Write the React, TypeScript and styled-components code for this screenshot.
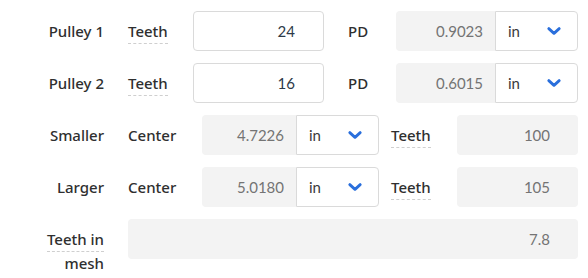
import styled, { createGlobalStyle } from 'styled-components';

const GlobalStyle = createGlobalStyle`
  body {
    margin: 0;
    background: #fff;
    font-family: Lato, "Noto Sans", sans-serif;
    color: #2f2f2f;
  }
`;

function Chevron() {
  return (
    <svg width="14" height="8" viewBox="0 0 14 8" fill="none">
      <polyline points="1.8,1.6 7,6.4 12.2,1.6" stroke="#2a6fdc" strokeWidth="2.8" strokeLinecap="round" strokeLinejoin="round" />
    </svg>
  );
}

function UnitSelect() {
  return (
    <SelectBox>
      <span>in</span>
      <Chevron />
    </SelectBox>
  );
}

interface ComboProps {
  value: string;
  width: number;
}

function Combo({ value, width }: ComboProps) {
  return (
    <ComboWrap $w={width}>
      <Output value={value} readOnly $pr={12} $joined />
      <UnitSelect />
    </ComboWrap>
  );
}

export default function App() {
  return (
    <>
      <GlobalStyle />
      <Form>
        <Row>
          <MainLabel>Pulley 1</MainLabel>
          <SubLabel $w={65}><Dotted>Teeth</Dotted></SubLabel>
          <Field defaultValue="24" $w={131} />
          <SubLabel $w={72} $pl={24}>PD</SubLabel>
          <Combo value="0.9023" width={182} />
        </Row>
        <Row>
          <MainLabel>Pulley 2</MainLabel>
          <SubLabel $w={65}><Dotted>Teeth</Dotted></SubLabel>
          <Field defaultValue="16" $w={131} />
          <SubLabel $w={72} $pl={24}>PD</SubLabel>
          <Combo value="0.6015" width={182} />
        </Row>
        <Row>
          <MainLabel>Smaller</MainLabel>
          <SubLabel $w={74}>Center</SubLabel>
          <Combo value="4.7226" width={177} />
          <SubLabel $w={78} $pl={12}><Dotted>Teeth</Dotted></SubLabel>
          <Output value="100" readOnly $w={121} $pr={28} />
        </Row>
        <Row>
          <MainLabel>Larger</MainLabel>
          <SubLabel $w={74}>Center</SubLabel>
          <Combo value="5.0180" width={177} />
          <SubLabel $w={78} $pl={12}><Dotted>Teeth</Dotted></SubLabel>
          <Output value="105" readOnly $w={121} $pr={28} />
        </Row>
        <Row>
          <MainLabel><Dotted>Teeth in mesh</Dotted></MainLabel>
          <Output value="7.8" readOnly $w={450} $pr={28} />
        </Row>
      </Form>
    </>
  );
}

const Form = styled.div`
  display: flex;
  flex-direction: column;
  gap: 12px;
  padding: 11px 10px 0 24px;
  font-size: 15px;
`;

const Row = styled.div`
  display: flex;
  align-items: flex-start;
  min-height: 40px;
`;

const MainLabel = styled.div`
  width: 80px;
  margin-right: 24px;
  padding-top: 8px;
  text-align: right;
  line-height: 24px;
  font-family: "Noto Sans", Lato, sans-serif;
  font-size: 15px;
  font-weight: 500;
  color: #2f2f2f;
`;

const SubLabel = styled.div<{ $w: number; $pl?: number }>`
  width: ${(p) => p.$w}px;
  padding-left: ${(p) => p.$pl ?? 0}px;
  box-sizing: border-box;
  padding-top: 8px;
  line-height: 24px;
  font-family: "Noto Sans", Lato, sans-serif;
  font-size: 15px;
  font-weight: 500;
  white-space: nowrap;
`;

const Dotted = styled.span`
  border-bottom: 1px dashed #cfcfcf;
  padding-bottom: 2px;
`;

const Field = styled.input<{ $w: number }>`
  width: ${(p) => p.$w}px;
  height: 40px;
  box-sizing: border-box;
  border: 1px solid #dadada;
  border-radius: 4px;
  background: #fff;
  padding: 0 28px 0 12px;
  text-align: right;
  font: inherit;
  font-size: 15px;
  color: #2e3a48;
  outline: none;
`;

const Output = styled.input<{ $w?: number; $pr: number; $joined?: boolean }>`
  width: ${(p) => (p.$w ? `${p.$w}px` : 'auto')};
  flex: ${(p) => (p.$joined ? '1 1 0' : 'none')};
  min-width: 0;
  height: 40px;
  box-sizing: border-box;
  border: none;
  border-radius: ${(p) => (p.$joined ? '4px 0 0 4px' : '4px')};
  background: #f3f3f3;
  padding: 0 ${(p) => p.$pr}px 0 12px;
  text-align: right;
  font: inherit;
  font-size: 15px;
  color: #747474;
  outline: none;
`;

const ComboWrap = styled.div<{ $w: number }>`
  display: flex;
  width: ${(p) => p.$w}px;
  height: 40px;
`;

const SelectBox = styled.div`
  width: 83px;
  box-sizing: border-box;
  display: flex;
  align-items: center;
  justify-content: space-between;
  padding: 0 16px 0 12px;
  border: 1px solid #dadada;
  border-radius: 0 4px 4px 0;
  background: #fff;
  color: #3a3a3a;
  font-size: 15px;
  cursor: pointer;
`;
